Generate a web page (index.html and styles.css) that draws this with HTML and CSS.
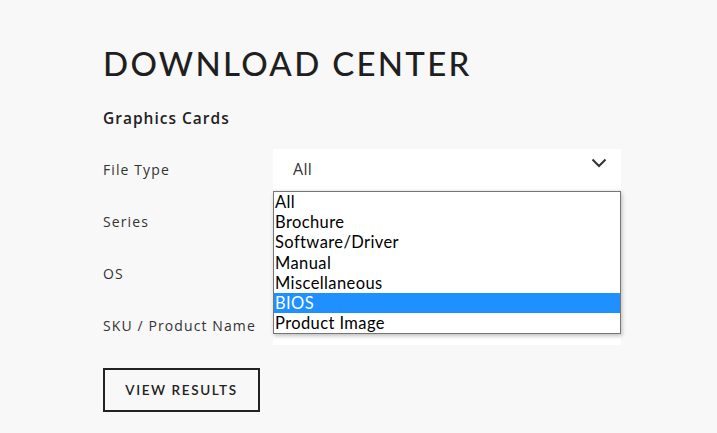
FILE: index.html
```html
<!DOCTYPE html>
<html>
<head>
<meta charset="utf-8">
<link rel="stylesheet" href="styles.css">
</head>
<body>
<main class="page">
  <h1 class="title">DOWNLOAD CENTER</h1>
  <h2 class="subtitle">Graphics Cards</h2>
  <div class="form">
    <div class="label">File Type</div>
    <div class="field select">
      <span class="value">All</span>
      <svg class="chev" width="16" height="10" viewBox="0 0 16 10"><path d="M1.5 1.5 L8 8 L14.5 1.5" fill="none" stroke="#333" stroke-width="2"/></svg>
      <ul class="dropdown">
        <li>All</li>
        <li>Brochure</li>
        <li>Software/Driver</li>
        <li>Manual</li>
        <li>Miscellaneous</li>
        <li class="active">BIOS</li>
        <li>Product Image</li>
      </ul>
    </div>
    <div class="label">Series</div>
    <div class="field"></div>
    <div class="label">OS</div>
    <div class="field"></div>
    <div class="label">SKU / Product Name</div>
    <div class="field"></div>
  </div>
  <button class="btn">VIEW RESULTS</button>
</main>
</body>
</html>
```
FILE: styles.css
```css
* { box-sizing: border-box; }
body {
  margin: 0;
  background: #f8f8f8;
  font-family: "Open Sans", "Lato", sans-serif;
  color: #222;
}
.page {
  padding: 43px 0 0 103px;
}
.title {
  margin: 0;
  font-family: "Lato", sans-serif;
  font-size: 33px;
  font-weight: 500;
  letter-spacing: 2.3px;
  line-height: 40px;
  color: #1f1f1f;
}
.subtitle {
  margin: 25px 0 0;
  font-size: 15.5px;
  font-weight: 600;
  letter-spacing: 1px;
  line-height: 20px;
  color: #222;
}
.form {
  margin-top: 21px;
  display: grid;
  grid-template-columns: 170px 348px;
  grid-auto-rows: 40px;
  row-gap: 12px;
}
.label {
  font-size: 14px;
  letter-spacing: 1.1px;
  color: #333;
  display: flex;
  align-items: center;
}
.field {
  background: #fff;
  position: relative;
}
.select {
  display: flex;
  align-items: center;
  padding-left: 20px;
}
.value {
  font-size: 16px;
  color: #333;
  letter-spacing: 0.3px;
}
.chev {
  position: absolute;
  right: 14px;
  top: 9px;
}
.dropdown {
  position: absolute;
  left: 0;
  top: 42px;
  width: 348px;
  margin: 0;
  padding: 0;
  list-style: none;
  background: #fff;
  border: 1px solid #767676;
  box-shadow: 1px 2px 4px rgba(0,0,0,0.25);
  z-index: 2;
}
.dropdown li {
  font-family: "Lato", sans-serif;
  font-size: 16.5px;
  line-height: 20.2px;
  letter-spacing: 0.4px;
  padding-left: 1px;
  color: #000;
}
.dropdown li.active {
  background: #1e90ff;
  color: #fff;
}
.btn {
  margin-top: 23px;
  width: 157px;
  height: 44px;
  border: 2px solid #222;
  background: transparent;
  font-family: "Lato", sans-serif;
  font-size: 13.5px;
  font-weight: 600;
  letter-spacing: 1.6px;
  color: #222;
  padding: 0;
}
```
